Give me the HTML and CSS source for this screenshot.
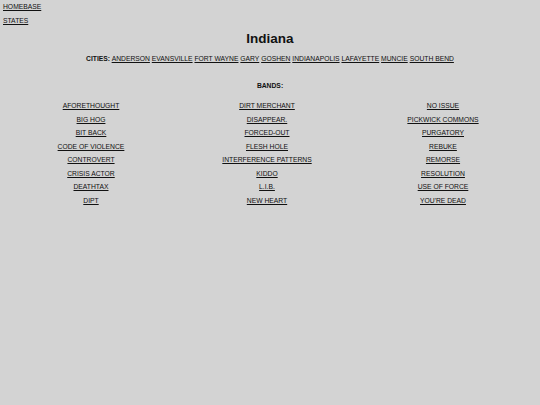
FILE: index.html
```html
<!DOCTYPE html>
<html lang="en">
<head>
    <meta charset="UTF-8">
    <title>Indiana</title>
    <link rel="stylesheet" href="styles.css">
</head>
<body>
    <div class="nav">
        <a href="#">HOMEBASE</a>
        <a href="#">STATES</a>
    </div>

    <h1>Indiana</h1>

    <p class="cities">
        <strong>CITIES:</strong>
        <a href="#">ANDERSON</a>
        <a href="#">EVANSVILLE</a>
        <a href="#">FORT WAYNE</a>
        <a href="#">GARY</a>
        <a href="#">GOSHEN</a>
        <a href="#">INDIANAPOLIS</a>
        <a href="#">LAFAYETTE</a>
        <a href="#">MUNCIE</a>
        <a href="#">SOUTH BEND</a>
    </p>

    <p class="bands-title"><strong>BANDS:</strong></p>

    <div class="bands">
        <div class="col">
            <a href="#">AFORETHOUGHT</a>
            <a href="#">BIG HOG</a>
            <a href="#">BIT BACK</a>
            <a href="#">CODE OF VIOLENCE</a>
            <a href="#">CONTROVERT</a>
            <a href="#">CRISIS ACTOR</a>
            <a href="#">DEATHTAX</a>
            <a href="#">DIPT</a>
        </div>
        <div class="col">
            <a href="#">DIRT MERCHANT</a>
            <a href="#">DISAPPEAR.</a>
            <a href="#">FORCED-OUT</a>
            <a href="#">FLESH HOLE</a>
            <a href="#">INTERFERENCE PATTERNS</a>
            <a href="#">KIDDO</a>
            <a href="#">L.I.B.</a>
            <a href="#">NEW HEART</a>
        </div>
        <div class="col">
            <a href="#">NO ISSUE</a>
            <a href="#">PICKWICK COMMONS</a>
            <a href="#">PURGATORY</a>
            <a href="#">REBUKE</a>
            <a href="#">REMORSE</a>
            <a href="#">RESOLUTION</a>
            <a href="#">USE OF FORCE</a>
            <a href="#">YOU'RE DEAD</a>
        </div>
    </div>
</body>
</html>
```

FILE: styles.css
```css
body {
    margin: 0;
    padding: 0 3px;
    background-color: #d3d3d3;
    color: #111;
    font-family: "Liberation Sans", Arial, sans-serif;
    font-size: 6.75px;
    line-height: 13.5px;
}
a {
    color: #111;
}
.nav a {
    display: block;
}
h1 {
    margin: 4px 0 0;
    text-align: center;
    font-size: 13.5px;
    line-height: 16px;
}
.cities {
    margin: 5px 0 0;
    text-align: center;
}
.bands-title {
    margin: 13px 0 0;
    text-align: center;
}
.bands {
    display: grid;
    grid-template-columns: repeat(3, 176px);
    margin-top: 7px;
}
.col {
    display: flex;
    flex-direction: column;
    align-items: center;
}
```
